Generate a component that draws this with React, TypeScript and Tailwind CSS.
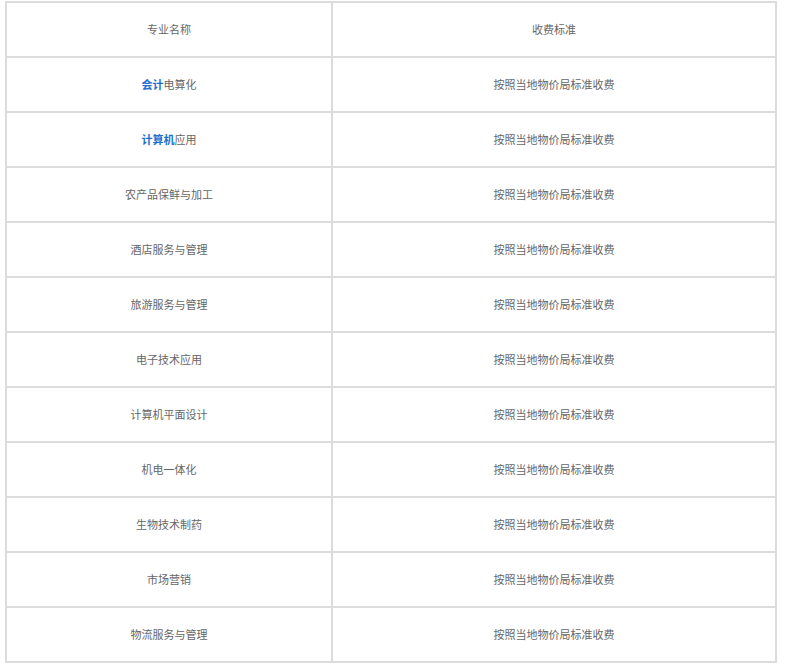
const rows: { blue?: string; rest: string }[] = [
  { blue: "会计", rest: "电算化" },
  { blue: "计算机", rest: "应用" },
  { rest: "农产品保鲜与加工" },
  { rest: "酒店服务与管理" },
  { rest: "旅游服务与管理" },
  { rest: "电子技术应用" },
  { rest: "计算机平面设计" },
  { rest: "机电一体化" },
  { rest: "生物技术制药" },
  { rest: "市场营销" },
  { rest: "物流服务与管理" },
];

const fee = "按照当地物价局标准收费";

const App = () => {
  return (
    <div className="w-[786px] h-[666px] bg-white pt-[1px] pl-[5px] font-['Noto_Sans_CJK_SC','Microsoft_YaHei',sans-serif] text-[11px] text-[#666]">
      <table className="w-[772px] border-collapse border-2 border-[#dcdcdc]">
        <tbody>
          <tr className="h-[55px]">
            <td className="w-[326px] border-2 border-[#dcdcdc] text-center">专业名称</td>
            <td className="border-2 border-[#dcdcdc] text-center">收费标准</td>
          </tr>
          {rows.map((row) => (
            <tr key={row.rest + (row.blue ?? "")} className="h-[55px]">
              <td className="border-2 border-[#dcdcdc] text-center">
                {row.blue && <span className="font-bold text-[#1e6fd0]">{row.blue}</span>}
                {row.rest}
              </td>
              <td className="border-2 border-[#dcdcdc] text-center">{fee}</td>
            </tr>
          ))}
        </tbody>
      </table>
    </div>
  );
};

export default App;
